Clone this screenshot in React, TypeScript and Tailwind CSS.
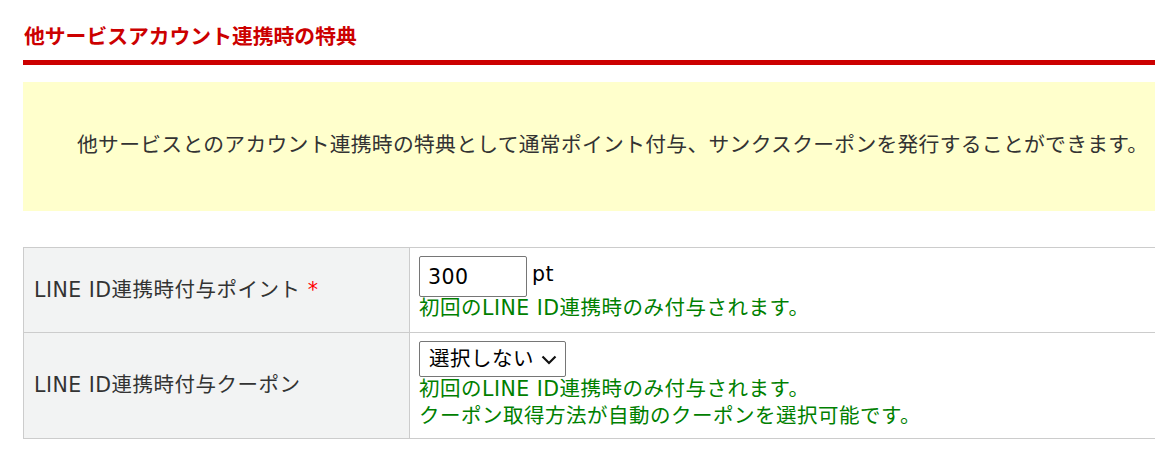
import React from 'react';

const font = { fontFamily: '"DejaVu Sans", "Noto Sans CJK JP", sans-serif' };

export default function App() {
  return (
    <div className="w-[1155px] h-[466px] overflow-hidden bg-white text-[#333]" style={font}>
      <div className="ml-[23px] w-[1200px] pt-[22px]">
        <h2 className="text-[20.8px] leading-[30px] font-bold text-[#cc0000] pl-[1px]">
          他サービスアカウント連携時の特典
        </h2>
        <div className="mt-[8px] h-[5px] bg-[#cc0000]" />

        <div className="mt-[17px] h-[129px] bg-[#ffffcc] pl-[54px] pt-[48px]">
          <p className="text-[20.8px] leading-[30px] tracking-[0.28px]">
            他サービスとのアカウント連携時の特典として通常ポイント付与、サンクスクーポンを発行することができます。
          </p>
        </div>

        <table className="mt-[36px] w-full border-collapse text-[20.5px] leading-[27px] tracking-[0.5px]">
          <tbody>
            <tr>
              <th className="w-[386px] h-[85px] border border-[#cccccc] bg-[#f2f3f3] px-[10px] text-left font-normal align-middle">
                LINE ID連携時付与ポイント <span className="text-[#ff0000]">*</span>
              </th>
              <td className="border border-[#cccccc] px-[9px] pt-[8px] pb-[7px] align-top">
                <div className="flex items-center gap-[5px]">
                  <input
                    defaultValue="300"
                    className="w-[108px] h-[41px] rounded-[2px] border border-[#767676] px-[8px] text-[20.5px] text-black outline-none"
                    style={font}
                  />
                  <span className="text-black -mt-[4px]">pt</span>
                </div>
                <div className="-mt-[2px] text-[#008000]">初回のLINE ID連携時のみ付与されます。</div>
              </td>
            </tr>
            <tr>
              <th className="h-[106px] border border-[#cccccc] bg-[#f2f3f3] px-[10px] text-left font-normal align-middle">
                LINE ID連携時付与クーポン
              </th>
              <td className="border border-[#cccccc] px-[9px] pt-[8px] pb-[8px] align-top">
                <div className="flex h-[36px] w-[147px] items-center justify-between rounded-[2px] border border-[#767676] pl-[9px] pr-[8px] text-black">
                  <span>選択しない</span>
                  <svg width="16" height="10" viewBox="0 0 16 10" fill="none" className="mt-[2px]">
                    <path d="M1.5 1.5 L8 8 L14.5 1.5" stroke="#111" strokeWidth="2.2" />
                  </svg>
                </div>
                <div className="-mt-[1px] text-[#008000]">
                  初回のLINE ID連携時のみ付与されます。
                  <br />
                  クーポン取得方法が自動のクーポンを選択可能です。
                </div>
              </td>
            </tr>
          </tbody>
        </table>
      </div>
    </div>
  );
}
